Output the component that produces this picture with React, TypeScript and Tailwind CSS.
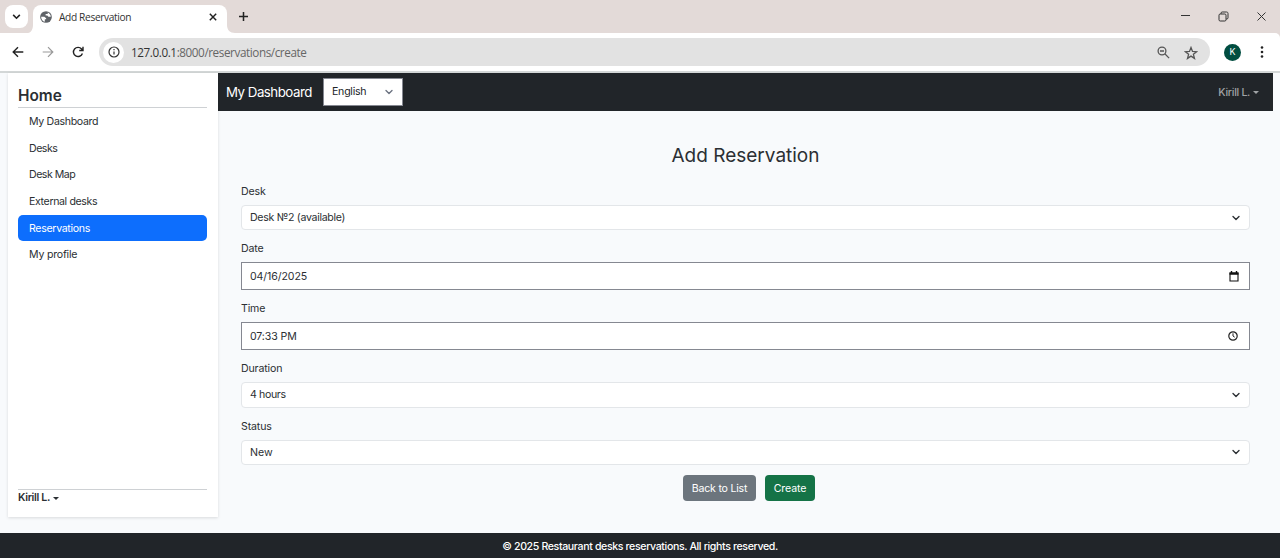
import type { ReactNode } from "react";

const navItems = [
  { label: "My Dashboard", tracking: "tracking-[-0.33px]" },
  { label: "Desks", tracking: "tracking-[-0.5px]" },
  { label: "Desk Map", tracking: "tracking-[-0.5px]" },
  { label: "External desks", tracking: "tracking-[-0.38px]" },
  { label: "Reservations", tracking: "tracking-[-0.32px]", active: true },
  { label: "My profile", tracking: "tracking-[-0.22px]" },
];

function Caret() {
  return <span className="border-x-[3px] border-t-[3px] border-x-transparent border-t-current" />;
}

function Chevron({ className = "" }: { className?: string }) {
  return (
    <svg viewBox="0 0 16 16" className={`size-[8px] fill-none stroke-current ${className}`}>
      <path d="m2 5 6 6 6-6" strokeWidth="2.700" strokeLinecap="round" strokeLinejoin="round" />
    </svg>
  );
}

function BrowserTabs() {
  return (
    <div className="flex h-[33px] bg-[#e3dad8]">
      <div className="mt-[5px] ml-[5px] flex h-[23px] w-[23px] items-center justify-center rounded-[8px] bg-white">
        <svg viewBox="0 0 10 10" className="size-[9px] fill-none stroke-[#222]" strokeWidth="1.8">
          <path d="m1.3 3.2 3.7 3.7 3.7-3.7" />
        </svg>
      </div>
      <svg viewBox="0 0 5 8" className="mt-auto h-[8px] w-[5px] fill-white">
        <path d="M5 0v8H0c3 0 5-4 5-8Z" />
      </svg>
      <div className="mt-[5px] flex h-[28px] w-[194px] items-center rounded-t-[8px] bg-white pl-[7px]">
        <svg viewBox="0 0 16 16" className="-mt-[5px] size-[12px] shrink-0">
          <circle cx="8" cy="8" r="7.8" fill="#5f6368" />
          <path d="M1.500 7.500h4.300l2.400 2v1.600H6.400v3.100C3.500 13.600 1.400 10.800 1.500 7.500ZM10.300 2c2.300.900 4 3.200 4.100 5.500h-3.200L9.700 6H7.500V3.900h2.800Z" fill="#fff" />
        </svg>
        <span className="-mt-[3px] ml-[7px] font-['Open_Sans','Noto_Sans',sans-serif] text-[10.2px] tracking-[-0.36px] text-[#333]">Add Reservation</span>
        <svg viewBox="0 0 10 10" className="-mt-[5px] mr-[10px] ml-auto size-[8px] stroke-[#222]" strokeWidth="1.8">
          <path d="m1 1 8 8M9 1 1 9" />
        </svg>
      </div>
      <svg viewBox="0 0 8 8" className="mt-auto size-[8px] fill-white">
        <path d="M0 0v8h8C3 8 0 5 0 0Z" />
      </svg>
      <svg viewBox="0 0 10 10" className="mt-[12px] ml-[4px] size-[9px] stroke-[#222]" strokeWidth="1.7">
        <path d="M5 0v10M0 5h10" />
      </svg>
      <div className="mt-[10px] mr-[13px] ml-auto flex items-start gap-[27px] fill-none stroke-[#333]">
        <svg viewBox="0 0 11 12" className="h-[12px] w-[11px]"><path d="M1 5.500h9" /></svg>
        <svg viewBox="0 0 11 12" className="h-[12px] w-[11px]">
          <rect x="1" y="4" width="7" height="7" rx="1.200" />
          <path d="M3 4V3.200C3 2.400 3.500 2 4.200 2h4.300c1 0 1.500.6 1.500 1.500v4.300c0 .7-.4 1.200-1.200 1.200H8" />
        </svg>
        <svg viewBox="0 0 11 12" className="h-[12px] w-[11px]"><path d="m1.500 2.500 8 8m0-8-8 8" /></svg>
      </div>
    </div>
  );
}

function AddressBar() {
  return (
    <div className="flex h-[38px] items-center rounded-tr-[5px] bg-white">
      <svg viewBox="0 0 12 12" className="ml-[12px] size-[12px] fill-none stroke-[#222]" strokeWidth="1.4">
        <path d="M11.300 6H1.500M6 1.200 1.200 6 6 10.800" />
      </svg>
      <svg viewBox="0 0 12 12" className="ml-[18px] size-[12px] fill-none stroke-[#999]" strokeWidth="1.200">
        <path d="M.7 6h9.800M6 1.200 10.800 6 6 10.800" />
      </svg>
      <svg viewBox="0 0 12 12" className="ml-[18px] size-[12px] fill-none stroke-[#222]" strokeWidth="1.400">
        <path d="M10.400 7.500A4.600 4.600 0 1 1 9.600 3l1 1.200M11 .8v3.700H7.200" />
      </svg>
      <div className="ml-[15px] flex h-[28px] w-[1111px] items-center rounded-full bg-[#e2e2e2] pl-[4px]">
        <div className="flex size-[21px] items-center justify-center rounded-full bg-white">
          <svg viewBox="0 0 12 12" className="size-[12px] fill-none stroke-[#333]" strokeWidth="1.200">
            <circle cx="6" cy="6" r="5" />
            <path d="M6 5.400v3.200M6 3v1.300" />
          </svg>
        </div>
        <span className="mt-[2px] ml-[7px] font-['Open_Sans','Noto_Sans',sans-serif] text-[11.7px] tracking-[-0.41px] text-[#666]">
          <span className="text-[#333]">127.0.0.1</span>:8000/reservations/create
        </span>
        <svg viewBox="0 0 13 13" className="mr-[14px] ml-auto size-[13px] fill-none stroke-[#555]" strokeWidth="1.300">
          <circle cx="5" cy="5" r="3.900" />
          <path d="M3 5h4M7.800 7.800l4.300 4.300" />
        </svg>
        <svg viewBox="0 0 14 14" className="mt-px mr-[12px] size-[14px] fill-none stroke-[#555]" strokeWidth="1.300">
          <path d="m7 1.500 1.500 3.900 4.100.3-3.200 2.600 1.100 4.100L7 10.100l-3.500 2.300 1.100-4.100-3.200-2.600 4.100-.3L7 1.500Z" />
        </svg>
      </div>
      <div className="ml-[14px] flex size-[17px] items-center justify-center rounded-full bg-[#004d40] text-[9px] text-white">K</div>
      <svg viewBox="0 0 4 14" className="mr-[16px] ml-auto h-[14px] w-[4px] fill-[#222]">
        <circle cx="2" cy="2.500" r="1.300" /><circle cx="2" cy="7" r="1.300" /><circle cx="2" cy="11.500" r="1.300" />
      </svg>
    </div>
  );
}

function Field({ label, height, children, outlined }: { label: string; height: string; children: ReactNode; outlined?: boolean }) {
  return (
    <div className="mb-[10px]">
      <div className="mb-[6px] h-[16px] pt-px leading-[16px] tracking-[-0.15px]">{label}</div>
      <div className={`flex items-center border bg-white pl-[8px] ${height} ${outlined ? "border-[#858891]" : "rounded-[4px] border-[#e3e6e9]"}`}>
        {children}
      </div>
    </div>
  );
}

export default function App() {
  return (
    <div className="flex h-[558px] w-[1280px] flex-col overflow-hidden bg-[#f8fafc] font-['Inter',sans-serif] text-[10.6px] text-[#2b2f33]">
      <div className="bg-[#e3dad8]">
        <BrowserTabs />
        <AddressBar />
      </div>
      <div className="h-[2px] shrink-0 bg-[#d3d7d7]" />
      <div className="-mt-px flex h-[461px] shrink-0 pt-px">
        <aside className="ml-[8px] flex h-[444px] w-[210px] shrink-0 flex-col bg-white pr-[11px] pl-[10px] shadow-[0_1px_3px_rgba(0,0,0,0.13)]">
          <h2 className="mt-[11px] h-[24px] border-b border-[#ced1d4] text-[15.4px] leading-[23px] font-semibold">Home</h2>
          <nav className="flex flex-col">
            {navItems.map((item) => (
              <a key={item.label} className={`flex h-[26.700px] items-center rounded-[5px] pt-px pl-[11px] ${item.tracking} ${item.active ? "bg-[#0d6efd] text-white" : ""}`}>
                {item.label}
              </a>
            ))}
          </nav>
          <div className="mt-auto mb-[11px] flex h-[17px] items-center gap-[3px] border-t border-[#ced1d4] font-semibold tracking-[-0.34px]">
            Kirill L.<Caret />
          </div>
        </aside>
        <div className="flex w-[1055px] flex-col">
          <header className="flex h-[38px] items-center bg-[#212529] pl-[8px] text-white">
            <span className="mt-[2px] w-[97px] text-[13.300px] tracking-[-0.5px]">My Dashboard</span>
            <div className="flex h-[28px] w-[80px] items-center justify-between border border-[#858891] bg-white pr-[9px] pl-[8px] tracking-[-0.25px] text-[#212529]">
              English<Chevron className="text-[#6b7280]" />
            </div>
            <div className="mt-[2px] mr-[14px] ml-auto flex items-center gap-[3px] font-medium tracking-[-0.3px] text-[#a0a3a5]">Kirill L.<Caret /></div>
          </header>
          <main className="flex w-[1032px] flex-col pt-[31px] pl-[23px]">
            <h1 className="mb-[15px] h-[26px] text-center text-[19px] leading-[28px]">Add Reservation</h1>
            <Field label="Desk" height="h-[25px]"><span className="tracking-[-0.3px]">Desk №2 (available)</span><Chevron className="mr-[9px] ml-auto" /></Field>
            <Field label="Date" height="h-[28px]" outlined>
              <span className="pt-px tracking-[-0.1px]">04/16/2025</span>
              <svg viewBox="0 0 10 11" className="mr-[10px] ml-auto h-[11px] w-[10px]">
                <path d="M1 2h8v8H1Z" fill="none" stroke="#111" strokeWidth="1.100" />
                <path d="M.5 1.500h9v2.300h-9ZM1.800 0h1.400v2H1.800ZM6.800 0h1.400v2H6.800Z" fill="#111" />
              </svg>
            </Field>
            <Field label="Time" height="h-[28px]" outlined>
              <span className="pt-px tracking-[-0.12px]">07:33 PM</span>
              <svg viewBox="0 0 10 10" className="mr-[11px] ml-auto size-[10px] fill-none stroke-[#222]" strokeWidth="1.200">
                <circle cx="5" cy="5" r="4.200" /><path d="M5 2.300V5l1.700 1.200" strokeWidth="1" />
              </svg>
            </Field>
            <Field label="Duration" height="h-[25.500px]"><span className="tracking-[-0.38px]">4 hours</span><Chevron className="mr-[9px] ml-auto" /></Field>
            <Field label="Status" height="h-[25.500px]"><span className="pt-px">New</span><Chevron className="mr-[9px] ml-auto" /></Field>
            <div className="flex justify-center gap-[9px] pl-[7px] text-white">
              <button className="h-[26px] w-[73px] rounded-[4px] bg-[#6c757d] pt-px tracking-[-0.22px]">Back to List</button>
              <button className="h-[26px] w-[50px] rounded-[4px] bg-[#157347] pt-px tracking-[-0.15px]">Create</button>
            </div>
          </main>
        </div>
      </div>
      <footer className="flex h-[26px] shrink-0 items-center justify-center bg-[#212529] pt-px font-medium tracking-[-0.37px] text-white">
        © 2025 Restaurant desks reservations. All rights reserved.
      </footer>
    </div>
  );
}
